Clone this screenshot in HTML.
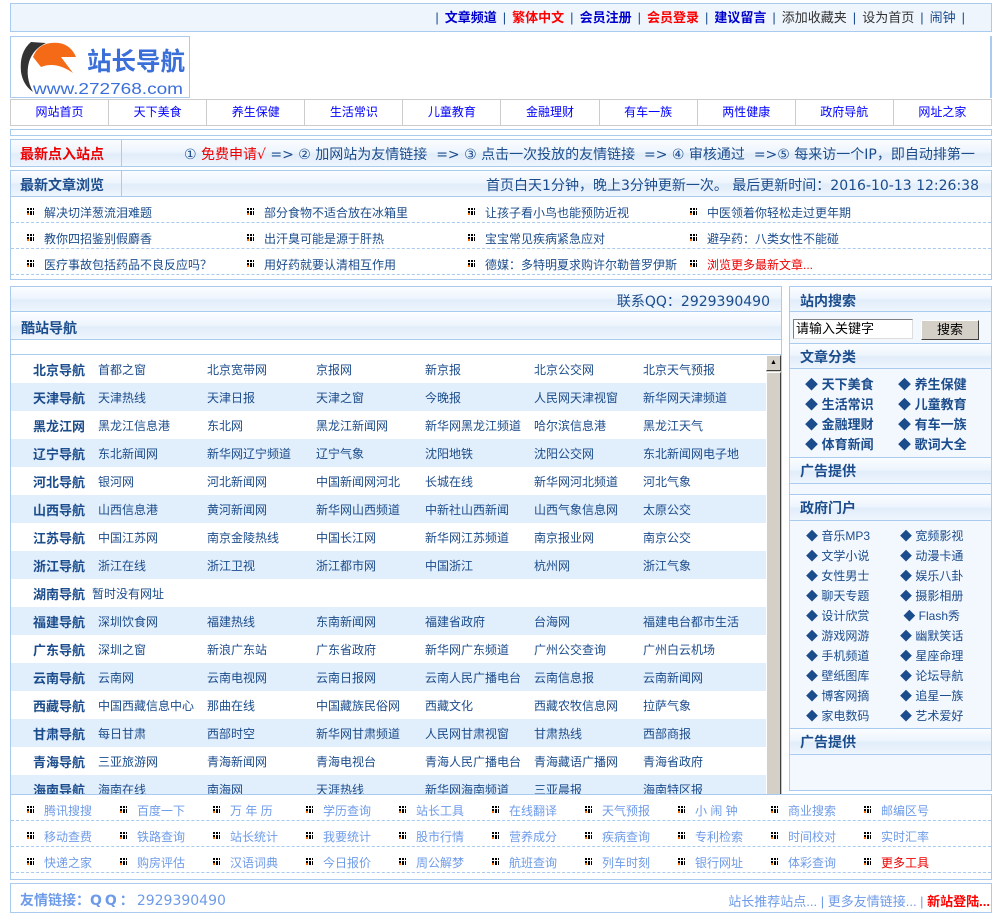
<!DOCTYPE html>
<html><head><meta charset="utf-8">
<style>
*{margin:0;padding:0;box-sizing:border-box}
body{width:1002px;height:911px;overflow:hidden;background:#fff;font-family:"Liberation Sans","Noto Sans CJK SC","WenQuanYi Zen Hei",sans-serif;font-size:12px;color:#1b4c8c;position:relative}
.a{position:absolute}
.bx{position:absolute;border:1px solid #a8cbef}
.gh{background:linear-gradient(#fbfdff 0%,#eef5fd 45%,#e1edfa 55%,#eef5fd 100%)}
.top{left:10px;top:3px;width:982px;height:29px;background:#eef5fd;font-size:13px;text-align:right;padding-right:20px;line-height:28px;color:#333}
.top .s{color:#1b4c8c;margin:0 6px}
.nav{left:10px;top:99px;width:982px;height:27px;border:1px solid #ccc;display:flex}
.nav div{flex:1;border-right:1px solid #ccc;text-align:center;line-height:25px;color:#00f;font-size:12px}
.nav div:last-child{border:none}
.h{font-weight:bold;font-size:14px;color:#1b4c8c}
.dj{font-family:"DejaVu Sans","Noto Sans CJK SC",sans-serif}
.art div{position:absolute;font-size:12px;color:#1b4c8c;white-space:nowrap}
.ic{display:inline-block;width:7px;height:7px;vertical-align:2px;margin-right:10px;position:relative}
.ic svg{position:absolute;left:0;top:0}
.dash{position:absolute;left:11px;width:980px;border-top:1px dashed #a8cbef}
table{border-collapse:collapse;table-layout:fixed}
.cz td{height:28px;font-size:12px;color:#1b4c8c;padding:0;white-space:nowrap;overflow:hidden}
.cz tr:nth-child(even){background:#e1eefb}
.cz td.l{font-weight:bold;font-size:13px;padding-left:22px}
.tl div{position:absolute;color:#6e9be8;font-size:12px;white-space:nowrap}
</style></head><body>
<div class="bx top"><span class="s">|</span><b style="color:#00c">文章频道</b><span class="s">|</span><b style="color:#f00">繁体中文</b><span class="s">|</span><b style="color:#00c">会员注册</b><span class="s">|</span><b style="color:#f00">会员登录</b><span class="s">|</span><b style="color:#00c">建议留言</b><span class="s">|</span>添加收藏夹<span class="s">|</span>设为首页<span class="s">|</span><span style="color:#1b4c8c">闹钟</span><span class="s">|</span></div>

<div class="bx" style="left:10px;top:36px;width:180px;height:62px;background:#fff;overflow:hidden">
<svg width="180" height="62" viewBox="0 0 180 62"><path d="M20 5 Q8 15 10 35 Q12 48 22 55 Q14 40 18 25 Q22 12 35 6Z" fill="#333"/><path d="M22 20 Q28 4 48 6 Q60 8 65 20 L50 20 L62 36 Q45 24 30 30Z" fill="#f56a16"/>
<text x="76" y="33" font-size="25" font-weight="bold" fill="#3a6ed9" font-family="Noto Sans CJK SC,sans-serif" textLength="98" lengthAdjust="spacingAndGlyphs">站长导航</text>
<text x="22" y="57" font-size="16" fill="#3a6ed9" font-family="Liberation Sans,sans-serif" textLength="150" lengthAdjust="spacingAndGlyphs">www.272768.com</text></svg></div>
<div class="a" style="left:990px;top:36px;width:2px;height:62px;background:#a8cbef"></div>

<div class="a nav"><div>网站首页</div><div>天下美食</div><div>养生保健</div><div>生活常识</div><div>儿童教育</div><div>金融理财</div><div>有车一族</div><div>两性健康</div><div>政府导航</div><div>网址之家</div></div>

<div class="bx" style="left:10px;top:129px;width:982px;height:7px"></div>

<div class="bx gh" style="left:10px;top:139px;width:982px;height:28px"></div>
<div class="a" style="left:121px;top:140px;width:1px;height:26px;background:#a8cbef"></div>
<div class="a" style="left:20px;top:144px;font-size:14px;font-weight:bold;color:#e00">最新点入站点</div>
<div class="a dj" style="left:184px;top:144px;font-size:14px;color:#1b4c8c;white-space:nowrap">① <span style="color:#e00">免费申请√</span> =&gt; ② 加网站为友情链接 &nbsp;=&gt; ③ 点击一次投放的友情链接 &nbsp;=&gt; ④ 审核通过 &nbsp;=&gt;⑤ 每来访一个IP，即自动排第一</div>

<div class="bx gh" style="left:10px;top:170px;width:982px;height:27px"></div>
<div class="a" style="left:121px;top:171px;width:1px;height:25px;background:#a8cbef"></div>
<div class="a h" style="left:20px;top:175px">最新文章浏览</div>
<div class="a dj" style="right:23px;top:175px;font-size:14px;color:#1b4c8c;white-space:nowrap">首页白天1分钟，晚上3分钟更新一次。 最后更新时间：2016-10-13 12:26:38</div>

<div class="bx" style="left:10px;top:196px;width:982px;height:84px;border-top:none"></div>
<div class="dash" style="top:222px"></div><div class="dash" style="top:248px"></div><div class="dash" style="top:274px"></div>
<div class="art" id="art"></div>

<div class="bx" style="left:10px;top:286px;width:772px;height:510px;background:#fff"></div>
<div class="a gh" style="left:11px;top:287px;width:770px;height:25px;border-bottom:1px solid #a8cbef"></div>
<div class="a dj" style="right:232px;top:291px;font-size:14px;color:#1b4c8c">联系QQ：2929390490</div>
<div class="a gh" style="left:11px;top:313px;width:770px;height:27px;border-bottom:1px solid #a8cbef"></div>
<div class="a h" style="left:21px;top:318px">酷站导航</div>
<div class="a" style="left:11px;top:354px;width:770px;height:1px;background:#a8cbef"></div>
<div class="a" style="left:11px;top:355px;width:755px;height:439px;overflow:hidden">
<table class="cz" style="width:755px" id="cz"><colgroup><col style="width:87px"><col style="width:109px"><col style="width:109px"><col style="width:109px"><col style="width:109px"><col style="width:109px"><col style="width:123px"></colgroup><tbody id="czb"></tbody></table></div>
<div class="a" style="left:766px;top:355px;width:15px;height:439px;background:#d4d0c8"></div>
<div class="a" style="left:766px;top:355px;width:15px;height:16px;background:#d4d0c8;border:1px solid;border-color:#fff #404040 #404040 #fff;font-size:7px;text-align:center;line-height:13px;color:#000">▲</div>
<div class="a" style="left:766px;top:372px;width:15px;height:424px;background:#d4d0c8;border:1px solid;border-color:#fff #404040 #404040 #fff"></div>

<div class="bx" style="left:789px;top:286px;width:203px;height:505px;background:#f3f8fe"></div>
<div class="a gh" style="left:790px;top:287px;width:201px;height:25px;border-bottom:1px solid #a8cbef"></div>
<div class="a h" style="left:800px;top:291px">站内搜索</div>
<div class="a" style="left:793px;top:319px;width:120px;height:20px;border:1px solid;border-color:#808080 #ddd #ddd #808080;background:#fff;font-size:13px;color:#000;padding-left:2px;line-height:18px">请输入关键字</div>
<div class="a" style="left:921px;top:320px;width:58px;height:20px;background:#d4d0c8;border:1px solid;border-color:#fff #404040 #404040 #fff;font-size:13px;color:#000;text-align:center;line-height:18px">搜索</div>
<div class="a gh" style="left:790px;top:343px;width:201px;height:26px;border-top:1px solid #a8cbef;border-bottom:1px solid #a8cbef"></div>
<div class="a h" style="left:800px;top:347px">文章分类</div>
<div class="a" style="left:805px;top:375px;width:180px;font-size:13px;font-weight:bold;line-height:20px;color:#1b4c8c">
<div style="float:left;width:93px">◆ 天下美食<br>◆ 生活常识<br>◆ 金融理财<br>◆ 体育新闻</div><div style="float:left">◆ 养生保健<br>◆ 儿童教育<br>◆ 有车一族<br>◆ 歌词大全</div></div>
<div class="a gh" style="left:790px;top:457px;width:201px;height:27px;border-top:1px solid #a8cbef;border-bottom:1px solid #a8cbef"></div>
<div class="a h" style="left:800px;top:461px">广告提供</div>
<div class="a gh" style="left:790px;top:494px;width:201px;height:27px;border-top:1px solid #a8cbef;border-bottom:1px solid #a8cbef"></div>
<div class="a h" style="left:800px;top:498px">政府门户</div>
<div class="a" style="left:806px;top:526px;width:180px;font-size:12px;line-height:20px;color:#1b4c8c">
<div style="float:left;width:94px">◆ 音乐MP3<br>◆ 文学小说<br>◆ 女性男士<br>◆ 聊天专题<br>◆ 设计欣赏<br>◆ 游戏网游<br>◆ 手机频道<br>◆ 壁纸图库<br>◆ 博客网摘<br>◆ 家电数码</div><div style="float:left">◆ 宽频影视<br>◆ 动漫卡通<br>◆ 娱乐八卦<br>◆ 摄影相册<br>&nbsp;◆ Flash秀<br>◆ 幽默笑话<br>◆ 星座命理<br>◆ 论坛导航<br>◆ 追星一族<br>◆ 艺术爱好</div></div>
<div class="a gh" style="left:790px;top:728px;width:201px;height:27px;border-top:1px solid #a8cbef;border-bottom:1px solid #a8cbef"></div>
<div class="a h" style="left:800px;top:732px">广告提供</div>

<div class="bx" style="left:10px;top:794px;width:982px;height:86px;background:#fff"></div>
<div class="dash" style="top:820px"></div><div class="dash" style="top:846px"></div><div class="dash" style="top:872px"></div>
<div class="tl" id="tl"></div>

<div class="bx" style="left:10px;top:883px;width:982px;height:30px;background:#fff"></div>
<div class="a dj" style="left:20px;top:890px;font-size:14px;color:#6e9be8"><b>友情链接：<span style="letter-spacing:3px">QQ：</span></b>2929390490</div>
<div class="a" style="right:12px;top:891px;font-size:13px;color:#6e9be8;white-space:nowrap">站长推荐站点... | 更多友情链接... | <b style="color:#f00">新站登陆...</b></div>

<script>
var IC='<span class="ic"><svg width="7" height="7"><rect x="0" y="0" width="2" height="2" fill="#000"/><rect x="3" y="0" width="2" height="2" fill="#000"/><rect x="0" y="3" width="2" height="2" fill="#000"/><rect x="3" y="3" width="2" height="2" fill="#000"/><rect x="6" y="0" width="1" height="2" fill="#000"/><rect x="6" y="3" width="1" height="2" fill="#000"/><rect x="0" y="5" width="2" height="2" fill="#f60"/><rect x="3" y="5" width="2" height="2" fill="#000"/><rect x="6" y="5" width="1" height="2" fill="#000"/></svg></span>';
var arts=[["解决切洋葱流泪难题","部分食物不适合放在冰箱里","让孩子看小鸟也能预防近视","中医领着你轻松走过更年期"],["教你四招鉴别假麝香","出汗臭可能是源于肝热","宝宝常见疾病紧急应对","避孕药：八类女性不能碰"],["医疗事故包括药品不良反应吗？","用好药就要认清相互作用","德媒：多特明夏求购许尔勒普罗伊斯","<span style='color:#e00'>浏览更多最新文章...</span>"]];
var xs=[27,247,468,690],h='';
arts.forEach(function(r,i){r.forEach(function(t,j){h+='<div style="left:'+xs[j]+'px;top:'+(204+i*26)+'px">'+IC+t+'</div>'})});
document.getElementById('art').innerHTML=h;
var cz=[["北京导航","首都之窗","北京宽带网","京报网","新京报","北京公交网","北京天气预报"],["天津导航","天津热线","天津日报","天津之窗","今晚报","人民网天津视窗","新华网天津频道"],["黑龙江网","黑龙江信息港","东北网","黑龙江新闻网","新华网黑龙江频道","哈尔滨信息港","黑龙江天气"],["辽宁导航","东北新闻网","新华网辽宁频道","辽宁气象","沈阳地铁","沈阳公交网","东北新闻网电子地"],["河北导航","银河网","河北新闻网","中国新闻网河北","长城在线","新华网河北频道","河北气象"],["山西导航","山西信息港","黄河新闻网","新华网山西频道","中新社山西新闻","山西气象信息网","太原公交"],["江苏导航","中国江苏网","南京金陵热线","中国长江网","新华网江苏频道","南京报业网","南京公交"],["浙江导航","浙江在线","浙江卫视","浙江都市网","中国浙江","杭州网","浙江气象"],["湖南导航","暂时没有网址","","","","",""],["福建导航","深圳饮食网","福建热线","东南新闻网","福建省政府","台海网","福建电台都市生活"],["广东导航","深圳之窗","新浪广东站","广东省政府","新华网广东频道","广州公交查询","广州白云机场"],["云南导航","云南网","云南电视网","云南日报网","云南人民广播电台","云南信息报","云南新闻网"],["西藏导航","中国西藏信息中心","那曲在线","中国藏族民俗网","西藏文化","西藏农牧信息网","拉萨气象"],["甘肃导航","每日甘肃","西部时空","新华网甘肃频道","人民网甘肃视窗","甘肃热线","西部商报"],["青海导航","三亚旅游网","青海新闻网","青海电视台","青海人民广播电台","青海藏语广播网","青海省政府"],["海南导航","海南在线","南海网","天涯热线","新华网海南频道","三亚晨报","海南特区报"]];
h='';cz.forEach(function(r){h+='<tr><td class="l">'+r[0]+'</td>';if(r[1]=="暂时没有网址"){h+='<td colspan="6" style="position:relative;left:-6px">暂时没有网址</td>'}else{for(var j=1;j<7;j++)h+='<td>'+r[j]+'</td>'}h+='</tr>'});
document.getElementById('czb').innerHTML=h;
var tl=[["腾讯搜搜","百度一下","万 年 历","学历查询","站长工具","在线翻译","天气预报","小 闹 钟","商业搜索","邮编区号"],["移动查费","铁路查询","站长统计","我要统计","股市行情","营养成分","疾病查询","专利检索","时间校对","实时汇率"],["快递之家","购房评估","汉语词典","今日报价","周公解梦","航班查询","列车时刻","银行网址","体彩查询","<span style='color:#e00'>更多工具</span>"]];
h='';tl.forEach(function(r,i){r.forEach(function(t,j){h+='<div style="left:'+(27+j*93)+'px;top:'+(802+i*26)+'px">'+IC+t+'</div>'})});
document.getElementById('tl').innerHTML=h;
</script>
</body></html>
